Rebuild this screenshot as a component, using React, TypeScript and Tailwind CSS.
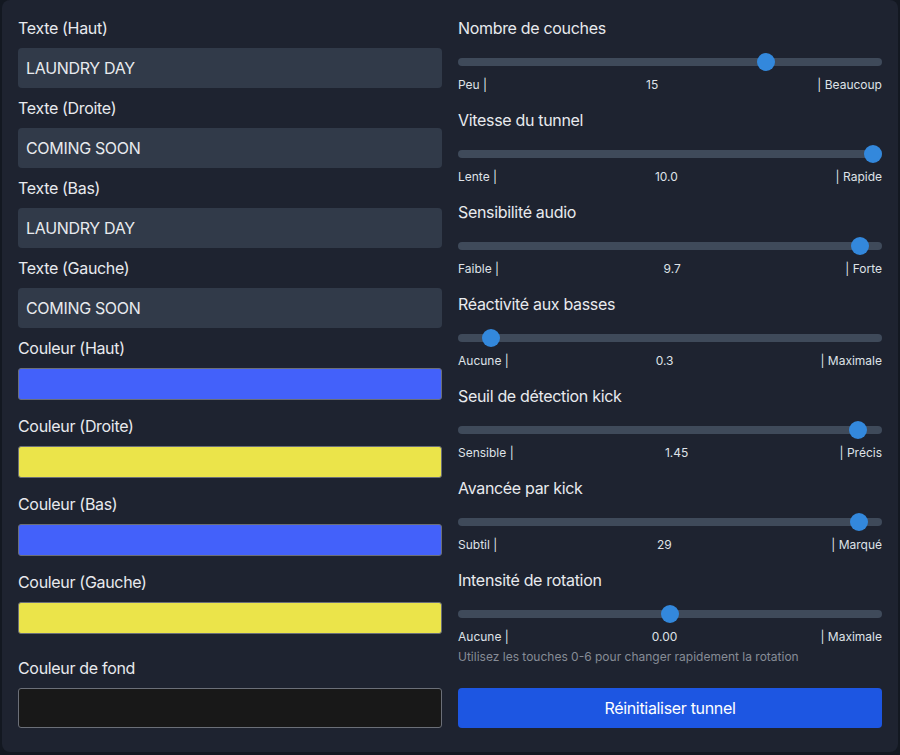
import React from "react";

interface SliderSetting {
  label: string;
  min: string;
  max: string;
  value: string;
  fraction: number;
}

const textFields = [
  { label: "Texte (Haut)", value: "LAUNDRY DAY" },
  { label: "Texte (Droite)", value: "COMING SOON" },
  { label: "Texte (Bas)", value: "LAUNDRY DAY" },
  { label: "Texte (Gauche)", value: "COMING SOON" },
];

const colorFields = [
  { label: "Couleur (Haut)", swatch: "bg-[#4361fa]" },
  { label: "Couleur (Droite)", swatch: "bg-[#ebe44a]" },
  { label: "Couleur (Bas)", swatch: "bg-[#4361fa]" },
  { label: "Couleur (Gauche)", swatch: "bg-[#ebe44a]" },
];

const sliders: SliderSetting[] = [
  { label: "Nombre de couches", min: "Peu |", max: "| Beaucoup", value: "15", fraction: 14 / 19 },
  { label: "Vitesse du tunnel", min: "Lente |", max: "| Rapide", value: "10.0", fraction: 1 },
  { label: "Sensibilité audio", min: "Faible |", max: "| Forte", value: "9.7", fraction: 0.968 },
  { label: "Réactivité aux basses", min: "Aucune |", max: "| Maximale", value: "0.3", fraction: 0.058 },
  { label: "Seuil de détection kick", min: "Sensible |", max: "| Précis", value: "1.45", fraction: 0.962 },
  { label: "Avancée par kick", min: "Subtil |", max: "| Marqué", value: "29", fraction: 28 / 29 },
  { label: "Intensité de rotation", min: "Aucune |", max: "| Maximale", value: "0.00", fraction: 0.5 },
];

const Slider = ({ setting }: { setting: SliderSetting }) => (
  <div>
    <div className="h-6 leading-6 text-base tracking-[-0.02em] text-[#e8eaee]">{setting.label}</div>
    <div className="relative mt-[18px] h-2 rounded-full bg-[#3f4a5a]">
      <div
        className="absolute top-1/2 h-[18px] w-[18px] -translate-x-1/2 -translate-y-1/2 rounded-full bg-[#3388dc]"
        style={{ left: `calc(9px + (100% - 18px) * ${setting.fraction})` }}
      />
    </div>
    <div className="mt-[11px] flex justify-between text-xs leading-4 text-[#dfe2e7]">
      <span>{setting.min}</span>
      <span>{setting.value}</span>
      <span>{setting.max}</span>
    </div>
  </div>
);

export default function App() {
  return (
    <div
      className="min-h-[755px] w-[900px] bg-[#131821] pl-[2px]"
      style={{ fontFamily: "Inter, 'Noto Sans', 'Liberation Sans', sans-serif" }}
    >
      <div className="grid h-[752px] w-[896px] grid-cols-2 gap-4 rounded-lg bg-[#1e2330] px-4 pt-4 pb-6">
        {/* left column */}
        <div className="flex flex-col">
          {textFields.map((f) => (
            <div key={f.label} className="mb-2">
              <div className="mb-2 h-6 leading-6 text-base tracking-[-0.02em] text-[#e8eaee]">{f.label}</div>
              <div className="flex h-10 items-center rounded bg-[#313a49] px-2 text-base tracking-[-0.02em] text-[#e8eaee]">
                {f.value}
              </div>
            </div>
          ))}
          {colorFields.map((f) => (
            <div key={f.label} className="mb-[14px]">
              <div className="mb-2 h-6 leading-6 text-base tracking-[-0.02em] text-[#e8eaee]">{f.label}</div>
              <div className={`h-8 rounded-[3px] border border-[#6b6f78] ${f.swatch}`} />
            </div>
          ))}
          <div className="mt-2">
            <div className="mb-2 h-6 leading-6 text-base tracking-[-0.02em] text-[#e8eaee]">Couleur de fond</div>
            <div className="h-10 rounded-[3px] border border-[#6b6f78] bg-[#181818]" />
          </div>
        </div>

        {/* right column */}
        <div className="flex flex-col gap-[15px]">
          {sliders.slice(0, 6).map((s) => (
            <Slider key={s.label} setting={s} />
          ))}
          <div>
            <Slider setting={sliders[6]} />
            <p className="mt-1 text-xs leading-4 text-[#868c96]">
              Utilisez les touches 0-6 pour changer rapidement la rotation
            </p>
            <button className="mt-[23px] flex h-10 w-full items-center justify-center rounded bg-[#1d56e2] text-base tracking-[-0.02em] text-white">
              Réinitialiser tunnel
            </button>
          </div>
        </div>
      </div>
    </div>
  );
}
